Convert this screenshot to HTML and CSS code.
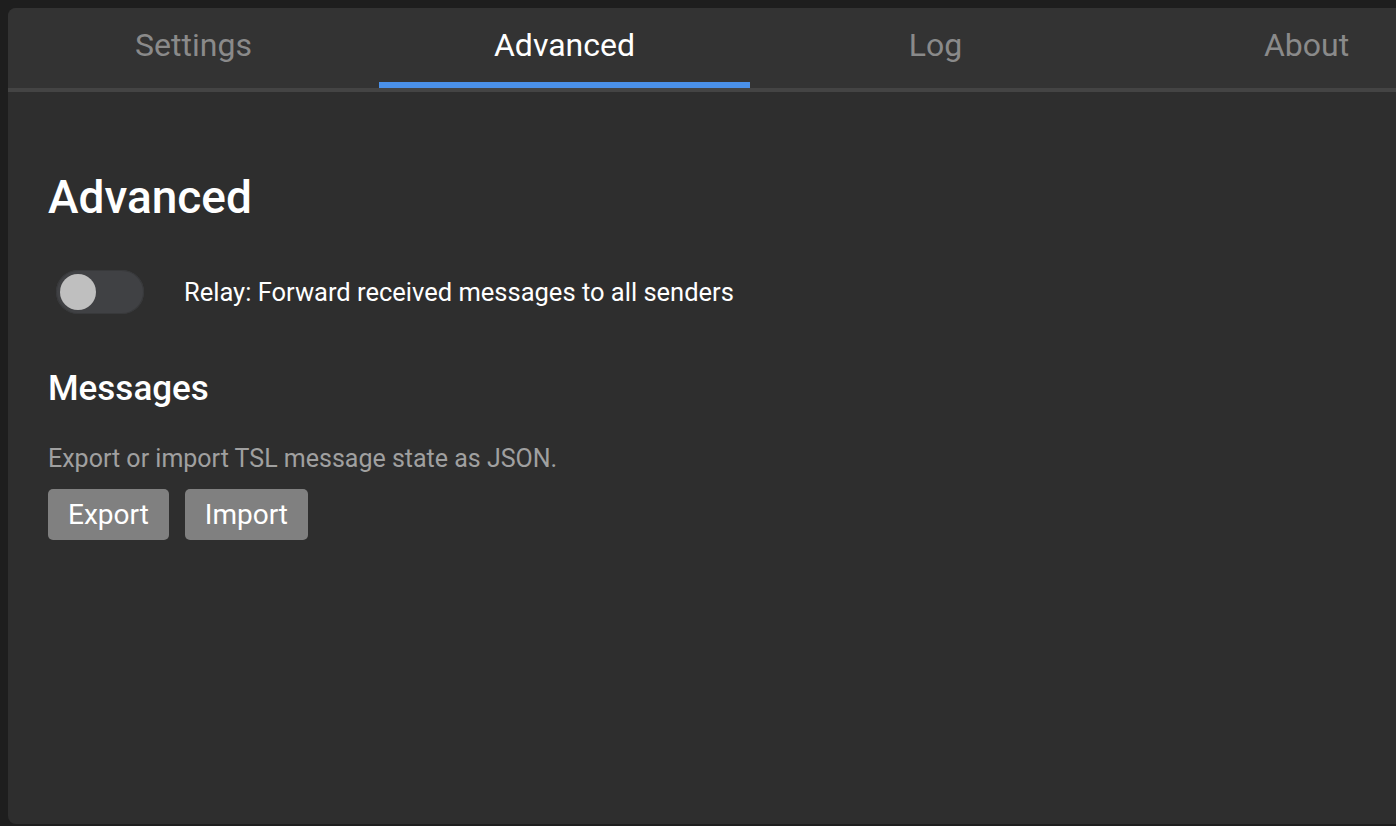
FILE: index.html
```html
<!DOCTYPE html>
<html lang="en">
<head>
<meta charset="utf-8">
<title>Advanced</title>
<link rel="stylesheet" href="styles.css">
</head>
<body>
<div class="panel">
  <nav class="tabs">
    <div class="tab">Settings</div>
    <div class="tab active">Advanced</div>
    <div class="tab">Log</div>
    <div class="tab">About</div>
  </nav>
  <main class="content">
    <h1 class="title">Advanced</h1>
    <div class="row">
      <span class="toggle"><span class="knob"></span></span>
      <span class="row-label">Relay: Forward received messages to all senders</span>
    </div>
    <h2 class="subtitle">Messages</h2>
    <p class="desc">Export or import TSL message state as JSON.</p>
    <div class="buttons">
      <button class="btn">Export</button>
      <button class="btn">Import</button>
    </div>
  </main>
</div>
</body>
</html>
```
FILE: styles.css
```css
html, body {
  margin: 0;
  padding: 0;
  overflow: hidden;
  background: #1e1e1e;
}
body {
  padding: 8px 0 0 8px;
  font-family: Roboto, "Liberation Sans", Arial, sans-serif;
  color: #ffffff;
}
.panel {
  width: 1388px;
  height: 816px;
  background: #2e2e2e;
  border-radius: 8px 0 0 8px;
  overflow: hidden;
}
.tabs {
  display: flex;
  height: 80px;
  background: #333333;
  border-bottom: 4px solid #444444;
  overflow: hidden;
}
.tab {
  flex: 0 0 371px;
  box-sizing: border-box;
  padding-top: 18px;
  text-align: center;
  font-size: 32px;
  color: #8a8a8a;
}
.tab.active {
  color: #ffffff;
  border-bottom: 6px solid #4a90e8;
}
.content {
  padding: 77px 40px 0 40px;
}
.title {
  margin: 0;
  font-size: 46px;
  line-height: 56px;
  font-weight: 500;
}
.row {
  display: flex;
  align-items: center;
  gap: 40px;
  margin-top: 45px;
  padding-left: 8px;
}
.toggle {
  box-sizing: border-box;
  width: 88px;
  height: 44px;
  border-radius: 22px;
  background: #404144;
  box-shadow: inset 0 0 0 1px #38393b;
  display: flex;
  align-items: center;
  padding-left: 4px;
}
.knob {
  width: 36px;
  height: 36px;
  border-radius: 50%;
  background: #bfbfbf;
}
.row-label {
  font-size: 25.5px;
  line-height: 28px;
}
.subtitle {
  margin: 55px 0 0 0;
  font-size: 35px;
  line-height: 40px;
  font-weight: 500;
}
.desc {
  margin: 36px 0 0 0;
  font-size: 25px;
  line-height: 28px;
  color: #a0a0a0;
}
.buttons {
  display: flex;
  gap: 16px;
  margin-top: 16px;
}
.btn {
  font-family: inherit;
  font-size: 28px;
  line-height: 51px;
  height: 51px;
  padding: 0 20px;
  border: none;
  border-radius: 5px;
  background: #808080;
  color: #ffffff;
}
```
